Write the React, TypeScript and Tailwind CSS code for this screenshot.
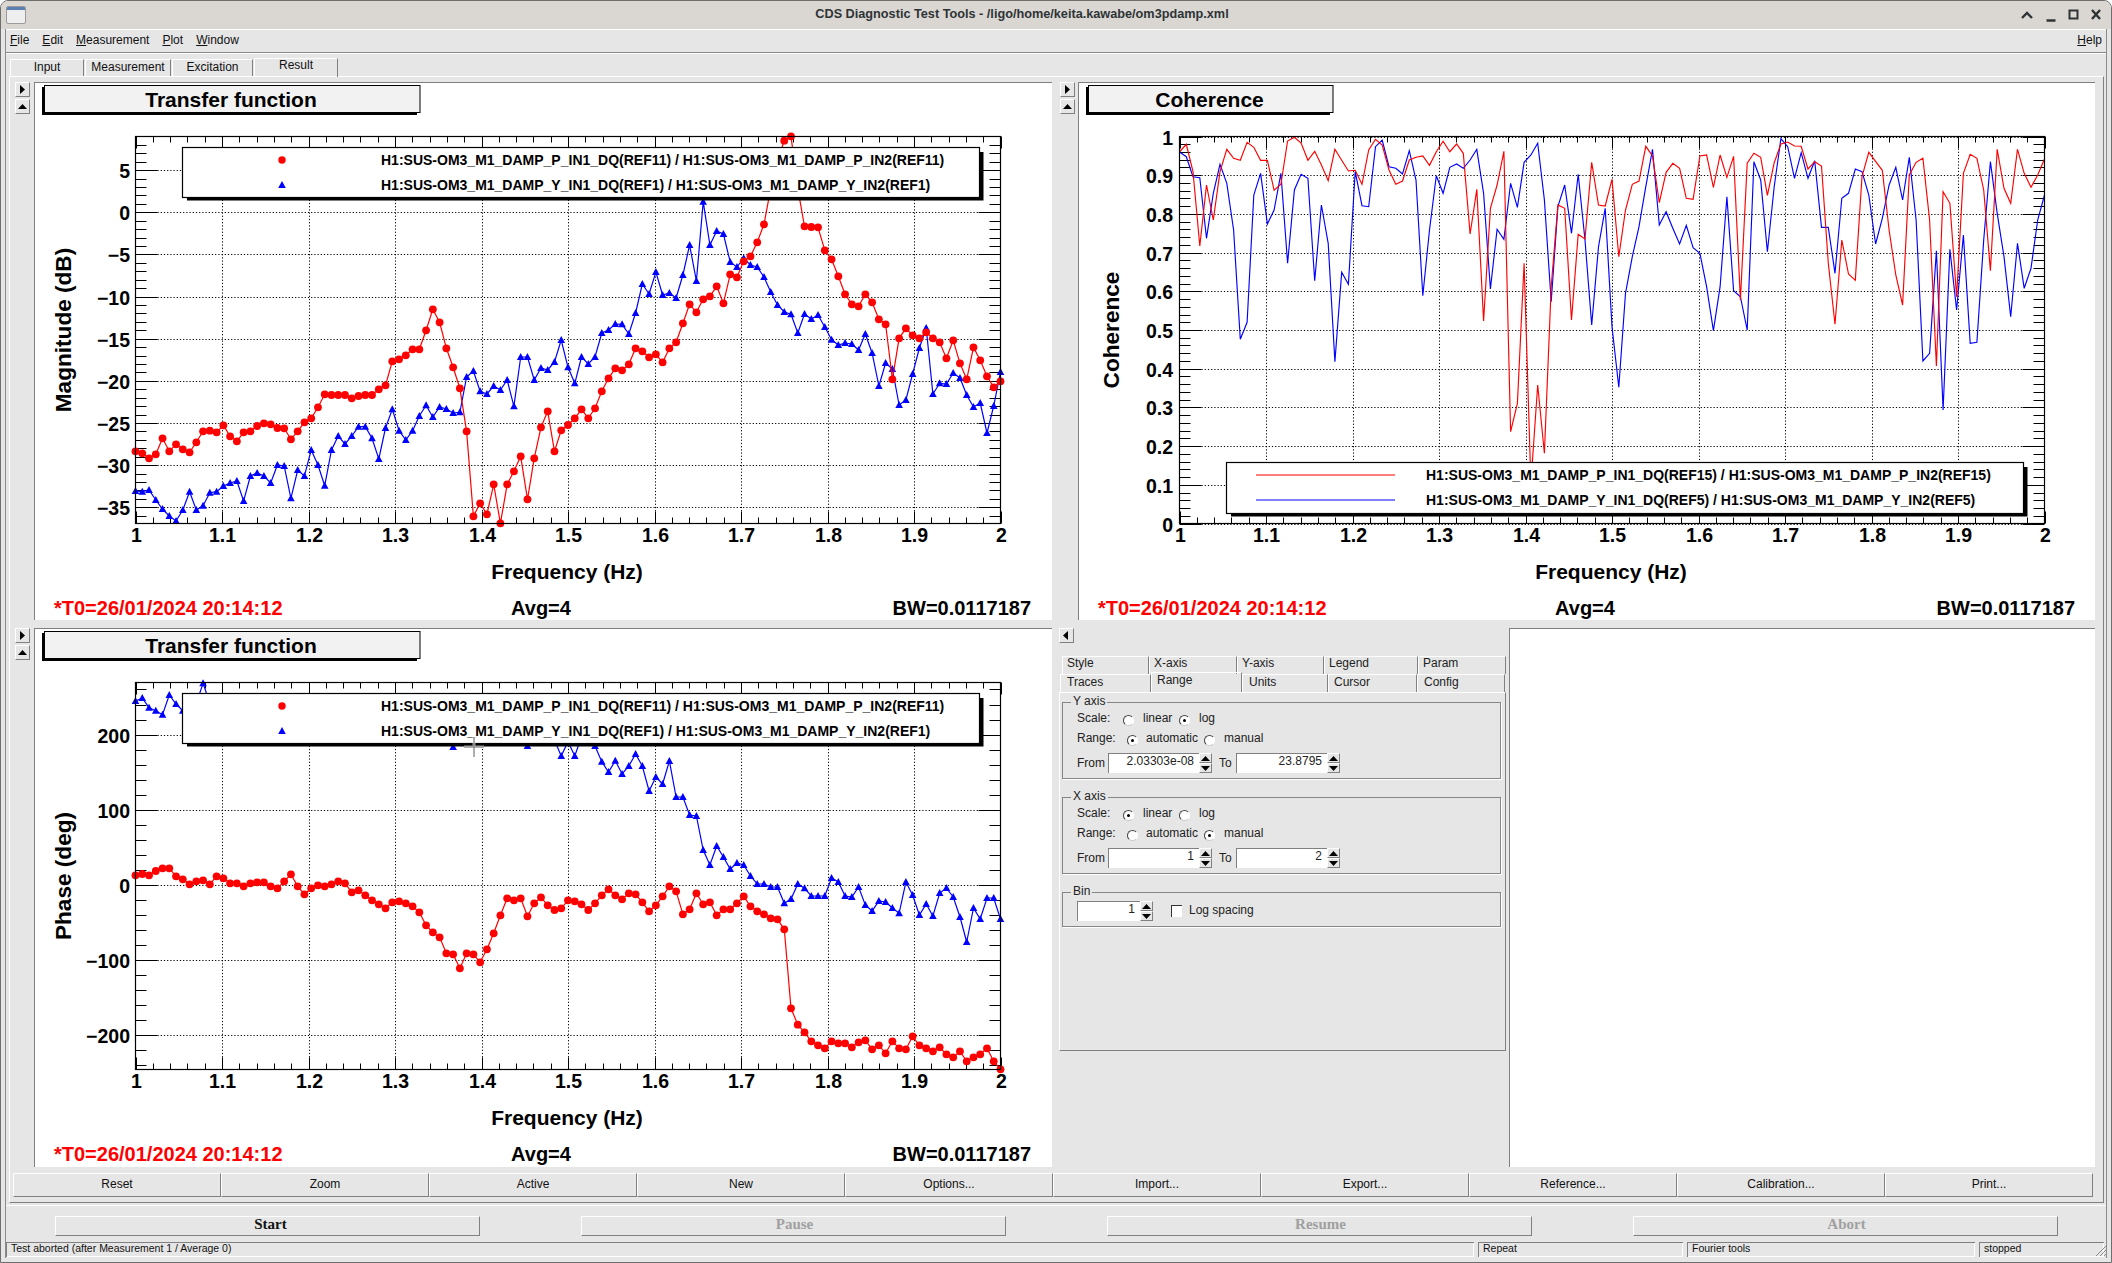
import type { ReactNode } from "react";

// curve samples are pixel rows read off the plots, one per frequency bin (129 bins)
const magRed = [994,1000,1015,1003,955,994,973,988,997,967,934,932,937,916,949,964,937,934,918,910,913,924,925,958,934,907,895,862,823,825,825,825,835,828,825,825,808,796,724,718,706,688,688,631,568,607,685,742,805,934,1189,1150,1183,1093,1210,1093,1054,1009,1138,1015,922,874,994,931,915,895,868,895,865,814,775,745,751,733,685,694,712,703,727,685,667,610,553,577,538,529,499,550,463,472,424,409,367,313,205,120,62,49,205,319,321,322,391,418,469,523,553,559,523,547,598,613,778,655,625,646,655,637,655,667,715,661,730,778,682,721,769,802,784];
const magBlue = [1113,1115,1110,1140,1167,1188,1203,1170,1115,1170,1157,1118,1115,1098,1089,1083,1143,1068,1059,1068,1089,1035,1038,1135,1050,1068,990,1035,1097,990,948,972,948,920,920,955,1017,924,868,932,960,932,888,856,891,861,867,879,877,771,753,814,822,798,810,780,859,711,711,780,744,750,726,660,742,790,711,732,711,639,630,612,613,642,579,492,522,456,525,519,534,465,375,483,245,375,333,342,426,441,415,435,441,471,516,555,576,583,639,582,597,585,621,659,675,669,672,690,642,699,798,729,747,855,840,762,684,624,822,790,792,759,774,825,861,849,939,858,756];
const phaseRed = [616,612,616,603,595,595,619,628,643,634,631,643,619,625,640,640,649,640,637,637,649,655,634,613,649,673,655,646,649,643,634,640,667,661,676,691,703,715,697,694,700,709,727,766,787,802,850,853,895,850,853,877,838,790,736,685,691,685,739,700,682,706,720,715,691,694,703,720,700,676,658,676,688,670,673,697,724,706,679,649,664,733,718,670,703,697,736,718,718,700,679,709,724,733,745,748,778,1015,1064,1087,1114,1126,1135,1114,1120,1120,1132,1117,1111,1138,1126,1150,1114,1135,1138,1099,1126,1135,1144,1132,1153,1162,1144,1174,1162,1153,1135,1174,1198];
const phaseBlue = [93,84,113,122,134,75,102,122,130,100,40,100,130,150,170,160,150,140,130,150,170,190,180,160,150,170,190,180,170,190,200,190,180,170,190,200,210,190,170,180,190,200,190,180,200,210,200,231,200,190,180,170,160,150,170,180,190,200,228,200,180,190,210,258,215,258,200,200,228,275,306,272,312,288,252,288,363,321,342,273,381,381,435,438,540,585,528,561,597,579,585,618,642,642,651,651,700,687,642,655,678,678,678,624,636,678,681,651,705,723,693,696,714,730,636,675,735,702,738,669,654,681,741,816,714,747,684,684,747];
const cohRed = [96,73,155,378,195,300,155,88,115,121,67,82,121,121,211,193,63,52,69,121,94,135,182,88,121,153,151,193,90,58,75,150,193,183,120,112,108,136,95,64,95,72,100,342,208,603,265,195,94,935,850,430,1090,795,1000,500,255,265,600,343,357,127,255,258,178,410,270,193,183,79,108,248,157,130,145,235,238,108,105,202,105,172,109,540,130,100,112,226,128,72,66,78,79,147,125,138,430,613,360,462,481,170,97,124,151,330,465,555,165,127,115,300,738,215,250,530,160,103,115,210,452,88,205,250,88,160,202,165,117];
const cohBlue = [96,110,170,173,355,220,133,190,330,658,607,225,160,312,270,160,430,210,163,175,482,255,370,725,457,493,155,257,260,80,60,140,145,162,92,180,527,330,167,220,142,132,145,120,88,220,507,328,358,190,262,127,105,70,240,545,260,195,340,163,360,615,380,265,620,802,520,410,320,200,88,315,275,325,372,316,383,400,500,632,500,230,512,530,630,125,180,395,200,56,80,175,98,175,122,322,322,460,235,220,147,155,225,372,295,195,142,240,112,300,723,700,392,870,388,570,345,670,667,360,125,280,410,590,370,505,445,300,225];

const L = 101.5;
const R = 966.5;
const T = 54.5;
const B = 441.5;
const binX = (i: number) => L + (i * (R - L)) / 128;

interface YAxis {
  min: number;
  max: number;
  every: number;
  y: (n: number) => number;
  label: (n: number) => string;
  right: number;
}

const magAxis: YAxis = { min: -36, max: 9, every: 5, y: (n) => 130.3 - 8.43 * n, label: (n) => (n < 0 ? `−${-n}` : `${n}`), right: 96 };
const phaseAxis: YAxis = { min: -12, max: 13, every: 5, y: (n) => 257 - 0.752 * n * 20, label: (n) => (n < 0 ? `−${-n * 20}` : `${n * 20}`), right: 96 };
const cohAxis: YAxis = { min: 0, max: 50, every: 5, y: (n) => 441.5 - 7.74 * n, label: (n) => (n === 50 ? "1" : n === 0 ? "0" : (n / 50).toFixed(1)), right: 95 };

function Ticks({ axis }: { axis: YAxis }) {
  const rows = [];
  for (let n = axis.min; n <= axis.max; n++) {
    const major = n % axis.every === 0;
    const y = Math.round(axis.y(n)) + 0.5;
    const len = major ? 22 : 11;
    rows.push(
      <g key={n}>
        <line x1={L} x2={L + len} y1={y} y2={y} stroke="#000" />
        <line x1={R - len} x2={R} y1={y} y2={y} stroke="#000" />
        {major && <line x1={L + 22} x2={R - 22} y1={y} y2={y} stroke="#000" strokeDasharray="1.2 2" />}
        {major && (
          <text x={axis.right} y={y + 7} textAnchor="end" fontSize={19.5} fontWeight={700}>
            {axis.label(n)}
          </text>
        )}
      </g>
    );
  }
  const cols = [];
  for (let k = 0; k <= 50; k++) {
    const major = k % 5 === 0;
    const x = Math.round(L + (k * (R - L)) / 50) + 0.5;
    const len = major ? 12 : 6;
    cols.push(
      <g key={k}>
        <line x1={x} x2={x} y1={T} y2={T + len} stroke="#000" />
        <line x1={x} x2={x} y1={B - len} y2={B} stroke="#000" />
        {major && k > 0 && k < 50 && <line x1={x} x2={x} y1={T + 12} y2={B - 12} stroke="#000" strokeDasharray="1.2 2" />}
        {major && (
          <text x={x} y={460} textAnchor="middle" fontSize={19.5} fontWeight={700}>
            {k === 0 ? "1" : k === 50 ? "2" : (1 + k / 50).toFixed(1)}
          </text>
        )}
      </g>
    );
  }
  return (
    <g>
      {rows}
      {cols}
    </g>
  );
}

function Tri({ x, y }: { x: number; y: number }) {
  return <polygon points={`${x},${y - 4} ${x + 3.8},${y + 3} ${x - 3.8},${y + 3}`} fill="#00f" />;
}

function MarkedCurves({ red, blue, offset }: { red: number[]; blue: number[]; offset: number }) {
  const path = (a: number[]) => a.map((z, i) => `${binX(i).toFixed(1)},${(z / 3 + offset).toFixed(1)}`).join(" ");
  return (
    <g>
      <polyline points={path(blue)} fill="none" stroke="#00f" strokeWidth={1.2} />
      {blue.map((z, i) => (
        <Tri key={i} x={binX(i)} y={z / 3 + offset} />
      ))}
      <polyline points={path(red)} fill="none" stroke="#f00" strokeWidth={1.2} />
      {red.map((z, i) => (
        <circle key={i} cx={binX(i)} cy={z / 3 + offset} r={3.9} fill="#f00" />
      ))}
    </g>
  );
}

function LineCurves({ red, blue }: { red: number[]; blue: number[] }) {
  const path = (a: number[]) => a.map((z, i) => `${binX(i).toFixed(1)},${(z / 3 + 38).toFixed(1)}`).join(" ");
  return (
    <g>
      <polyline points={path(blue)} fill="none" stroke="#00f" strokeWidth={1.15} />
      <polyline points={path(red)} fill="none" stroke="#f00" strokeWidth={1.15} />
    </g>
  );
}

function LegendBox({ top, lines, markers }: { top: number; lines: string[]; markers: boolean }) {
  const h = top === 65 ? 50 : 51;
  const y1 = top + 13;
  const y2 = top + 38;
  return (
    <g>
      <rect x={153} y={top + 5} width={796.5} height={h - 1.5} fill="#000" />
      <rect x={148.5} y={top + 0.5} width={797} height={h} fill="#fff" stroke="#000" strokeWidth={1.2} />
      {markers ? (
        <>
          <circle cx={248} cy={y1} r={3.7} fill="#f00" />
          <Tri x={248} y={y2} />
        </>
      ) : (
        <>
          <line x1={178} x2={317} y1={y1} y2={y1} stroke="#f00" strokeWidth={1.2} />
          <line x1={178} x2={317} y1={y2} y2={y2} stroke="#00f" strokeWidth={1.2} />
        </>
      )}
      <text x={markers ? 347 : 348} y={y1 + 5} fontSize={14} fontWeight={700}>
        {lines[0]}
      </text>
      <text x={markers ? 347 : 348} y={y2 + 5} fontSize={14} fontWeight={700}>
        {lines[1]}
      </text>
    </g>
  );
}

interface PlotProps {
  title: string;
  titleEnd: number;
  yLabel: string;
  labelX: number;
  axis: YAxis;
  legend: string[];
  markers: boolean;
  children: ReactNode;
  cursor?: boolean;
  height: number;
}

function Plot({ title, titleEnd, yLabel, labelX, axis, legend, markers, children, cursor, height }: PlotProps) {
  return (
    <svg width="100%" height={height} className="block bg-white">
      {/* canvas has a 1px sunken edge, coordinates below count from outside it */}
      <g transform="translate(-1 -1)">
        <rect x={8} y={5} width={titleEnd - 11} height={28} fill="#000" />
        <rect x={10.5} y={3.5} width={titleEnd - 10.5} height={27} fill="#f2f2f2" stroke="#000" />
        <text x={(titleEnd + 8) / 2} y={25} textAnchor="middle" fontSize={21} fontWeight={700}>
          {title}
        </text>
        <Ticks axis={axis} />
        {children}
        <rect x={L} y={T} width={R - L} height={B - T} fill="none" stroke="#000" strokeWidth={1.2} />
        <LegendBox top={markers ? 65 : 380} lines={legend} markers={markers} />
        <text x={533} y={497} textAnchor="middle" fontSize={21} fontWeight={700}>
          Frequency (Hz)
        </text>
        <text transform={`translate(${labelX} 248) rotate(-90)`} textAnchor="middle" fontSize={22.6} fontWeight={700}>
          {yLabel}
        </text>
        <text x={20} y={533} fontSize={20} fontWeight={700} fill="#f00">
          *T0=26/01/2024 20:14:12
        </text>
        <text x={507} y={533} textAnchor="middle" fontSize={20} fontWeight={700}>
          Avg=4
        </text>
        <text x={997} y={533} textAnchor="end" fontSize={20} fontWeight={700}>
          BW=0.0117187
        </text>
        {cursor && (
          <g>
            <g stroke="#fff" strokeWidth={3} opacity={0.6}>
              <line x1={430} x2={450} y1={119} y2={119} />
              <line x1={440} x2={440} y1={109} y2={129} />
            </g>
            <g stroke="#8c8c8c" strokeWidth={1.4}>
              <line x1={430} x2={450} y1={119} y2={119} />
              <line x1={440} x2={440} y1={109} y2={129} />
            </g>
          </g>
        )}
      </g>
    </svg>
  );
}

function ArrowBtn({ dir }: { dir: "right" | "up" | "left" }) {
  const pts = dir === "right" ? "2,0 7,4.5 2,9" : dir === "left" ? "6,0 1,4.5 6,9" : "0,7 4.5,2 9,7";
  return (
    <div className="w-[15px] h-[15px] flex items-center justify-center border border-t-white border-l-white border-r-[#808080] border-b-[#808080]">
      <svg width="9" height="9">
        <polygon points={pts} fill="#000" />
      </svg>
    </div>
  );
}

function Pane({ strip, children }: { strip: string; children: ReactNode }) {
  return (
    <div className="flex min-w-0">
      <div className={`${strip} flex flex-col gap-[2px] shrink-0`}>
        <ArrowBtn dir="right" />
        <ArrowBtn dir="up" />
      </div>
      <div className="flex-1 min-w-0 border-t border-l border-[#808080] overflow-hidden">{children}</div>
    </div>
  );
}

function Radio({ on }: { on?: boolean }) {
  return (
    <span className="w-[11px] h-[11px] mt-[5px] shrink-0 rounded-full bg-white border border-t-[#444] border-l-[#444] border-r-white border-b-[#ccc] flex items-center justify-center">
      {on && <span className="w-[3px] h-[3px] rounded-full bg-black" />}
    </span>
  );
}

function Spinner() {
  return (
    <div className="w-[13px] h-[20px] flex flex-col shrink-0">
      <div className="flex-1 flex items-center justify-center border border-t-white border-l-white border-r-[#808080] border-b-[#808080]">
        <svg width="9" height="5">
          <polygon points="0,5 4.5,0 9,5" fill="#000" />
        </svg>
      </div>
      <div className="flex-1 flex items-center justify-center border border-t-white border-l-white border-r-[#808080] border-b-[#808080]">
        <svg width="9" height="5">
          <polygon points="0,0 9,0 4.5,5" fill="#000" />
        </svg>
      </div>
    </div>
  );
}

function NumBox({ value, w }: { value: string; w: string }) {
  return (
    <div className={`${w} h-[20px] bg-white border-t border-l border-[#808080] text-right pr-[5px] leading-[15px] shrink-0`}>{value}</div>
  );
}

function Group({ label, children, className }: { label: string; children: ReactNode; className: string }) {
  return (
    <div className={`relative border border-[#868686] shadow-[1px_1px_0_#fff] pl-[14px] ${className}`}>
      <span className="absolute left-[8px] top-[-10px] bg-[#e6e6e6] px-[2px] leading-[16px]">{label}</span>
      {children}
    </div>
  );
}

function AxisGroup({ label, linear, auto, from, to }: { label: string; linear: boolean; auto: boolean; from: string; to: string }) {
  return (
    <Group label={label} className="h-[77px] pt-[5px]">
      <div className="flex items-center h-[20px]">
        <span className="w-[46px]">Scale:</span>
        <Radio on={linear} />
        <span className="ml-[9px] w-[36px]">linear</span>
        <Radio on={!linear} />
        <span className="ml-[9px]">log</span>
      </div>
      <div className="flex items-center h-[20px]">
        <span className="w-[50px]">Range:</span>
        <Radio on={auto} />
        <span className="ml-[8px] w-[58px]">automatic</span>
        <Radio on={!auto} />
        <span className="ml-[9px]">manual</span>
      </div>
      <div className="flex items-center h-[20px] mt-[5px]">
        <span className="w-[31px]">From</span>
        <NumBox value={from} w="w-[91px]" />
        <Spinner />
        <span className="ml-[7px] w-[17px]">To</span>
        <NumBox value={to} w="w-[91px]" />
        <Spinner />
      </div>
    </Group>
  );
}

const tabRow1 = [
  ["Style", "w-[87px]"],
  ["X-axis", "w-[88px]"],
  ["Y-axis", "w-[87px]"],
  ["Legend", "w-[94px]"],
  ["Param", "w-[88px]"],
];

function SettingsTab({ label, w, pl, lh, active }: { label: string; w: string; pl: string; lh: string; active?: boolean }) {
  return (
    <div className={`${w} ${pl} ${lh} shrink-0 border-t border-l border-r border-t-white border-l-white border-r-[#808080] ${active ? "h-[20px] -mt-[2px]" : "h-[18px]"}`}>
      {label}
    </div>
  );
}

function SettingsPanel() {
  return (
    <div className="w-[457px] pl-[7px] flex flex-col shrink-0 text-[12px] text-[#222]">
      <ArrowBtn dir="left" />
      <div className="flex mt-[13px] ml-[3px]">
        {tabRow1.map(([label, w]) => (
          <SettingsTab key={label} label={label} w={w} pl="pl-[4px]" lh="leading-[12px]" />
        ))}
      </div>
      <div className="flex ml-[1px]">
        <SettingsTab label="Traces" w="w-[91px]" pl="pl-[6px]" lh="leading-[14px]" />
        <SettingsTab label="Range" w="w-[91px]" pl="pl-[5px]" lh="leading-[15px]" active />
        <SettingsTab label="Units" w="w-[86px]" pl="pl-[6px]" lh="leading-[14px]" />
        <SettingsTab label="Cursor" w="w-[89px]" pl="pl-[5px]" lh="leading-[14px]" />
        <SettingsTab label="Config" w="w-[88px]" pl="pl-[6px]" lh="leading-[14px]" />
      </div>
      <div className="h-[359px] w-[447px] border border-t-white border-l-white border-r-[#808080] border-b-[#808080] pt-[9px] pl-[2px] pr-[4px] flex flex-col gap-[18px]">
        <AxisGroup label="Y axis" linear={false} auto from="2.03303e-08" to="23.8795" />
        <AxisGroup label="X axis" linear auto={false} from="1" to="2" />
        <Group label="Bin" className="h-[35px] pt-[8px]">
          <div className="flex items-center h-[20px]">
            <NumBox value="1" w="w-[63px]" />
            <Spinner />
            <span className="ml-[18px] w-[11px] h-[12px] bg-white border-t border-l border-t-[#333] border-l-[#333] shrink-0" />
            <span className="ml-[7px] pb-[2px]">Log spacing</span>
          </div>
        </Group>
      </div>
    </div>
  );
}

const actionButtons = ["Reset", "Zoom", "Active", "New", "Options...", "Import...", "Export...", "Reference...", "Calibration...", "Print..."];

function TopTab({ label, w, active }: { label: string; w: string; active?: boolean }) {
  return (
    <div
      className={`${w} shrink-0 text-center border-t border-l border-r border-t-white border-l-white border-r-[#808080] ${
        active ? "h-[19px] pb-[3px] leading-[13px]" : "h-[17px] mt-[1px] leading-[14px]"
      }`}
    >
      {label}
    </div>
  );
}

function RunButton({ label, off, pl }: { label: string; off?: boolean; pl: string }) {
  return (
    <div
      className={`w-[425px] h-[20px] ${pl} text-center leading-[15px] font-bold text-[15px] [font-family:'Liberation_Serif',serif] border border-t-white border-l-white border-r-[#808080] border-b-[#808080] ${
        off ? "text-[#a0a0a0]" : "text-[#111]"
      }`}
    >
      {label}
    </div>
  );
}

function StatusField({ label, w }: { label: string; w: string }) {
  return (
    <div className={`${w} h-[15px] pl-[4px] text-[10.5px] leading-[11px] shrink-0 border-t border-l border-[#808080] shadow-[inset_-1px_-1px_0_#fff]`}>{label}</div>
  );
}

export default function App() {
  return (
    <div className="relative w-[2112px] h-[1263px] overflow-hidden rounded-t-[8px] border border-[#6e6e6e] bg-[#e6e6e6] text-[#111] text-[12px] [font-family:'Liberation_Sans',Arial,sans-serif]">
      {/* window manager title bar */}
      <div className="h-[28px] bg-[#dad6d2] flex items-center pl-[5px] pr-[9px]">
        <div className="w-[20px] h-[18px] rounded-[2px] border border-[#9a9a9a] bg-[#eeeeee] overflow-hidden shrink-0">
          <div className="h-[3px] bg-[#5a7fb0]" />
        </div>
        <div className="flex-1 text-center font-bold text-[12.7px] text-[#2e3436]">
          CDS Diagnostic Test Tools - /ligo/home/keita.kawabe/om3pdamp.xml
        </div>
        <svg width="84" height="16" viewBox="0 0 84 16" className="shrink-0" fill="none" stroke="#2e3436" strokeWidth={2.4}>
          <polyline points="4,11 9,6 14,11" />
          <line x1="28.5" x2="37.5" y1="13.5" y2="13.5" />
          <rect x="51.5" y="3.5" width="8" height="8" strokeWidth={2} />
          <path d="M74 3 L82 12 M82 3 L74 12" />
        </svg>
      </div>

      <div className="ml-[4px] w-[2102px] h-[1229px] border-l border-r border-[#8a8a8a] bg-[#e6e6e6]">
        {/* menu bar */}
        <div className="h-[24px] flex items-center justify-between pl-[4px] pr-[4px] pb-[2px] border-t border-t-white border-b border-b-[#8a8a8a]">
          <div className="flex gap-[13px]">
            <span><u>F</u>ile</span>
            <span><u>E</u>dit</span>
            <span><u>M</u>easurement</span>
            <span><u>P</u>lot</span>
            <span><u>W</u>indow</span>
          </div>
          <span><u>H</u>elp</span>
        </div>

        {/* top tabs */}
        <div className="h-[23px] pt-[4px] pl-[4px] flex gap-[1px] border-t border-t-white">
          <TopTab label="Input" w="w-[74px]" />
          <TopTab label="Measurement" w="w-[86px]" />
          <TopTab label="Excitation" w="w-[81px]" />
          <TopTab label="Result" w="w-[84px]" active />
        </div>

        <div className="ml-[3px] w-[2095px] border-t border-l border-r border-b border-t-white border-l-white border-r-[#808080] border-b-[#808080] pt-[5px] pb-[5px]">
          <div className="grid grid-cols-[1042px_1043px] grid-rows-[538px_539px] gap-y-[8px]">
            <Pane strip="w-[24px] pl-[5px]">
              <Plot
                title="Transfer function"
                titleEnd={386}
                yLabel="Magnitude (dB)"
                labelX={37}
                axis={magAxis}
                markers
                height={538}
                legend={[
                  "H1:SUS-OM3_M1_DAMP_P_IN1_DQ(REF11) / H1:SUS-OM3_M1_DAMP_P_IN2(REF11)",
                  "H1:SUS-OM3_M1_DAMP_Y_IN1_DQ(REF1) / H1:SUS-OM3_M1_DAMP_Y_IN2(REF1)",
                ]}
              >
                <MarkedCurves red={magRed} blue={magBlue} offset={38} />
              </Plot>
            </Pane>
            <Pane strip="w-[26px] pl-[8px]">
              <Plot
                title="Coherence"
                titleEnd={255}
                yLabel="Coherence"
                labelX={41}
                axis={cohAxis}
                markers={false}
                height={538}
                legend={[
                  "H1:SUS-OM3_M1_DAMP_P_IN1_DQ(REF15) / H1:SUS-OM3_M1_DAMP_P_IN2(REF15)",
                  "H1:SUS-OM3_M1_DAMP_Y_IN1_DQ(REF5) / H1:SUS-OM3_M1_DAMP_Y_IN2(REF5)",
                ]}
              >
                <LineCurves red={cohRed} blue={cohBlue} />
              </Plot>
            </Pane>
            <Pane strip="w-[24px] pl-[5px]">
              <Plot
                title="Transfer function"
                titleEnd={386}
                yLabel="Phase (deg)"
                labelX={37}
                axis={phaseAxis}
                markers
                cursor
                height={539}
                legend={[
                  "H1:SUS-OM3_M1_DAMP_P_IN1_DQ(REF11) / H1:SUS-OM3_M1_DAMP_P_IN2(REF11)",
                  "H1:SUS-OM3_M1_DAMP_Y_IN1_DQ(REF1) / H1:SUS-OM3_M1_DAMP_Y_IN2(REF1)",
                ]}
              >
                <MarkedCurves red={phaseRed} blue={phaseBlue} offset={42} />
              </Plot>
            </Pane>
            <div className="flex min-w-0">
              <SettingsPanel />
              <div className="flex-1 bg-white border-t border-l border-[#808080]" />
            </div>
          </div>

          <div className="grid grid-cols-10 w-[2080px] ml-[3px] mt-[6px]">
            {actionButtons.map((b) => (
              <div key={b} className="h-[24px] text-center leading-[21px] border border-t-white border-l-white border-r-[#808080] border-b-[#808080]">
                {b}
              </div>
            ))}
          </div>
        </div>

        <div className="mt-[2px] border-t border-white" />

        <div className="flex ml-[49px] gap-[101px] mt-[10px]">
          <RunButton label="Start" pl="pl-[6px]" />
          <RunButton label="Pause" off pl="pl-[2px]" />
          <RunButton label="Resume" off pl="pl-[2px]" />
          <RunButton label="Abort" off pl="pl-[2px]" />
        </div>

        <div className="flex gap-[4px] mt-[6px]">
          <StatusField label="Test aborted (after Measurement 1 / Average 0)" w="w-[1468px]" />
          <StatusField label="Repeat" w="w-[205px]" />
          <StatusField label="Fourier tools" w="w-[288px]" />
          <StatusField label="stopped" w="w-[125px]" />
        </div>
      </div>

      <svg width="12" height="12" className="absolute right-[4px] bottom-[5px]" stroke="#8a8a8a">
        <path d="M1 11 L11 1 M5 11 L11 5 M9 11 L11 9" />
      </svg>
    </div>
  );
}
